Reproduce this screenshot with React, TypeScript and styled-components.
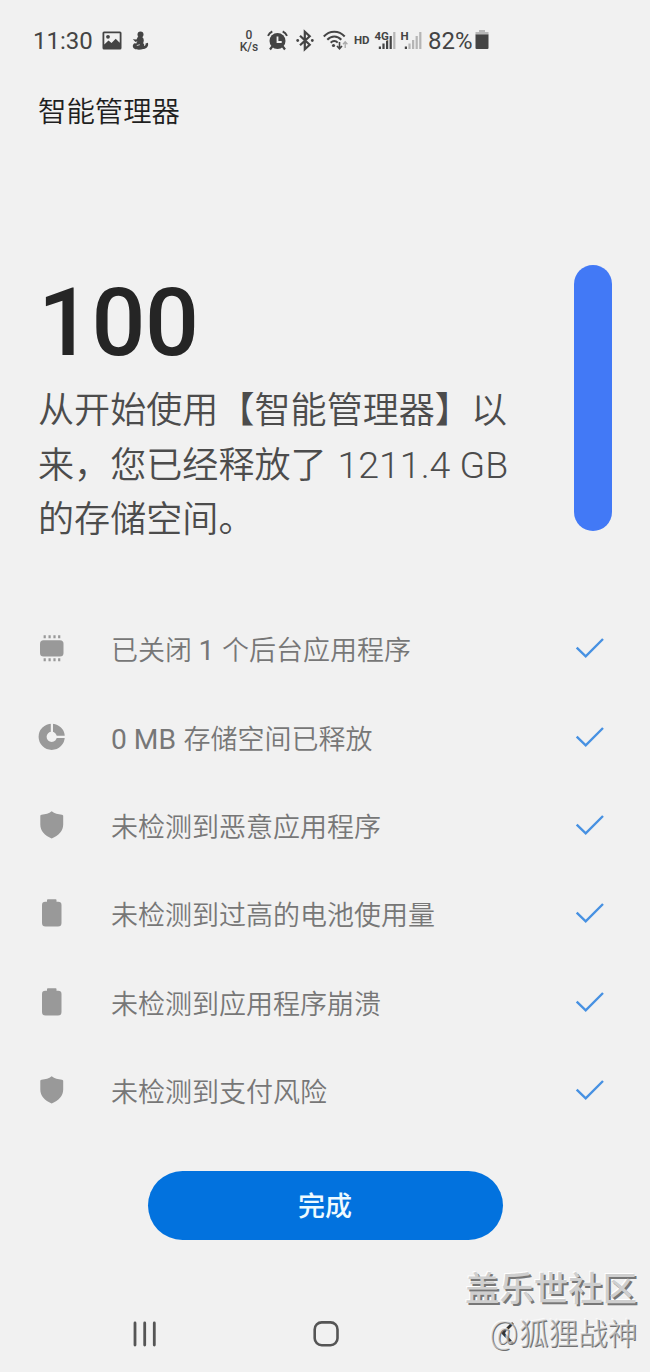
import React from "react";
import styled, { createGlobalStyle } from "styled-components";

const GlobalStyle = createGlobalStyle`
  * { box-sizing: border-box; }
  body {
    margin: 0;
    background: #f1f1f1;
    font-family: Roboto, "Noto Sans CJK SC", sans-serif;
  }
`;

const Screen = styled.div`
  position: relative;
  display: flex;
  flex-direction: column;
  width: 650px;
  height: 1372px;
  background: #f1f1f1;
  overflow: hidden;
`;

const StatusBar = styled.header`
  display: flex;
  align-items: center;
  height: 80px;
  padding-left: 33px;
  color: #444;
`;

const StatusItem = styled.span<{ $w: number; $gap?: number }>`
  flex: none;
  display: flex;
  width: ${(p) => p.$w}px;
  margin-left: ${(p) => p.$gap ?? 0}px;
  white-space: nowrap;

  svg { display: block; overflow: visible; }
`;

const StatusText = styled(StatusItem)`
  font-size: 24px;
  line-height: 28px;
  padding-top: 2px;
`;

const Speed = styled(StatusItem)`
  flex-direction: column;
  align-items: center;
  font-size: 12px;
  font-weight: 500;
  line-height: 12px;
  padding-top: 2px;
`;

const HdLabel = styled(StatusItem)`
  font-size: 11.5px;
  font-weight: 700;
  line-height: 14px;
`;

const Title = styled.h1`
  margin: 0;
  padding: 2px 0 0 38px;
  height: 62px;
  font-size: 28.4px;
  font-weight: 350;
  line-height: 62px;
  color: #1f1f1f;
`;

const Hero = styled.section`
  display: flex;
  justify-content: space-between;
  margin-top: 123px;
  height: 339px;
  padding: 0 38px;
`;

const HeroText = styled.div`
  display: flex;
  flex-direction: column;
`;

const Score = styled.div`
  height: 119px;
  padding-top: 1px;
  font-size: 95px;
  font-weight: 500;
  line-height: 114px;
  letter-spacing: -0.5px;
  color: #252525;
`;

const Summary = styled.p`
  margin: 0;
  font-size: 36.1px;
  font-weight: 350;
  line-height: 54.6px;
  color: #4c4c4c;
  white-space: nowrap;
`;

const Amount = styled.span`
  margin-left: 2px;
  font-size: 37.5px;
  font-weight: 300;
  line-height: 1;
`;

const ScoreBar = styled.div`
  width: 38px;
  height: 266px;
  border-radius: 19px;
  background: #4279f6;
`;

const Results = styled.ul`
  list-style: none;
  margin: 0;
  padding: 0 38px;
`;

const ResultRow = styled.li`
  display: flex;
  align-items: center;
  height: 88.4px;

  svg { display: block; flex: none; }
`;

const ResultText = styled.span`
  flex: 1;
  margin-left: 45px;
  padding-top: 6px;
  font-size: 27px;
  font-weight: 350;
  line-height: 40px;
  color: #777;
`;

const Latin = styled.span`
  margin-right: 1px;
  font-size: 28.2px;
  font-weight: 400;
  line-height: 1;
`;

const DoneButton = styled.button`
  align-self: center;
  width: 355px;
  height: 69px;
  margin-top: 37px;
  padding: 3px 0 0;
  border: 0;
  border-radius: 35px;
  background: #0272de;
  color: #eefaff;
  font: 500 27px/66px Roboto, "Noto Sans CJK SC", sans-serif;
`;

const NavBar = styled.nav`
  display: flex;
  align-items: center;
  height: 76px;
  margin-top: auto;
  padding-left: 132px;

  svg { display: block; }
  svg + svg { margin-left: 155px; }
  svg + svg + svg { margin-left: 156px; }
`;

const Watermark = styled.div`
  position: absolute;
  right: 13px;
  bottom: 17px;
  display: flex;
  flex-direction: column;
  align-items: flex-end;
  white-space: nowrap;
`;

const Community = styled.span`
  font-size: 34.4px;
  font-weight: 500;
  line-height: 48px;
  color: #cfcfcf;
  text-shadow: 2px 2px 0 #777, -1px -1px 0 #fff;
`;

const Author = styled.span`
  font-size: 29.5px;
  font-weight: 350;
  line-height: 42px;
  color: rgba(215, 215, 215, 0.6);
  text-shadow: 1px 1px 0 #707070, -1px -1px 0 rgba(255, 255, 255, 0.7);
`;

const AtSign = styled.span`
  font-size: 31.5px;
  line-height: 1;
  margin-right: 1px;
`;

const PictureIcon = () => (
  <svg width="20" height="19" viewBox="0 0 20 19">
    <path fillRule="evenodd" fill="#444" d="M2 0.5h16a1.5 1.5 0 0 1 1.5 1.5v15a1.5 1.5 0 0 1-1.5 1.5H2A1.5 1.5 0 0 1 .5 17V2A1.5 1.5 0 0 1 2 .5zM2.3 2.2v11.2l4.2-3.9 3 2.5 4.2-4.3 4 4V2.2z" />
    <circle cx="6" cy="5.8" r="1.9" fill="#444" />
  </svg>
);

const FigureIcon = () => (
  <svg width="17" height="19" viewBox="0 0 17 19">
    <circle cx="8.5" cy="3.5" r="3" fill="#444" />
    <path fill="#444" d="M6 5.500c3-1 6 .5 5.800 4.200l-.6 2.600c1.200.9 1.300 2 .8 2.700 1.400-.1 1.900-1.200 1.500-2.400l2.400-.9c1.200 3.700-1.700 6.300-4.800 6.300-2.600.9-6.500.9-8.600-.2C.2 16.500.3 13.800 2.500 12.300l1.900.2c.1-1 .5-1.600 1.100-2.200L3.500 11 .8 8.300 4.500 8.500z" />
    <path d="M4.800 14.500l3-.8" stroke="#ddd" strokeWidth="0.900" />
  </svg>
);

const AlarmIcon = () => (
  <svg width="21" height="21" viewBox="0 0 21 21">
    <path d="M1 5.800Q2.300 2.700 5.300 1.500M20 5.800Q18.700 2.700 15.700 1.500" fill="none" stroke="#444" strokeWidth="1.900" />
    <path d="M5.200 16.500L3 19.500M15.800 16.500l2.200 3" stroke="#444" strokeWidth="2.200" />
    <circle cx="10.500" cy="11" r="8" fill="#444" />
    <path d="M10.500 6.500V12h4.200" fill="none" stroke="#f1f1f1" strokeWidth="1.800" />
  </svg>
);

const BluetoothIcon = () => (
  <svg width="18" height="21" viewBox="0 0 18 21">
    <path d="M4 5.700l9.700 9.100-4.900 4.400V1.800l4.900 4.400L4 15.300" fill="none" stroke="#444" strokeWidth="2.200" />
    <circle cx="1.700" cy="10.500" r="1.400" fill="#444" />
    <circle cx="16.300" cy="10.500" r="1.400" fill="#444" />
  </svg>
);

const WifiIcon = () => (
  <svg width="25" height="20" viewBox="0 0 25 20">
    <path d="M.8 6.500C6.500.1 16 .1 21.700 6.500M4.300 9.700c4-4.300 10-4.300 14 0M7.700 12.700c2.200-2.200 5-2.200 7 0" fill="none" stroke="#444" strokeWidth="2" />
    <circle cx="10.500" cy="15.500" r="1.600" fill="#444" />
    <path d="M16.500 12v6.500M14 16l2.500 2.700L19 16" fill="none" stroke="#444" strokeWidth="1.600" />
    <path d="M22.200 18v-6M20 14.200l2.200-2.400 2.200 2.400" fill="none" stroke="#aaa" strokeWidth="1.300" />
  </svg>
);

const SignalIcon = ({ label, level }: { label: string; level: number }) => (
  <svg width="23" height="20" viewBox="0 0 23 20">
    {[2.5, 5.5, 9, 13, 17].map((h, i) => (
      <rect key={h} x={3.8 + i * 3.6} y={19 - h} width="2.2" height={h} fill={i < level ? "#444" : "#b5b5b5"} />
    ))}
    <text x="-0.500" y="9.500" fontSize="11.500" fontWeight="700" fill="#444" stroke="#f1f1f1" strokeWidth="1.500" paintOrder="stroke">{label}</text>
  </svg>
);

const StatusBattery = () => (
  <svg width="14" height="20" viewBox="0 0 14 20">
    <path d="M4 0h6v2h3.500v3H.5V2H4z" fill="#b8b8b8" />
    <path d="M.5 4.500h13V18a1 1 0 0 1-1 1h-11a1 1 0 0 1-1-1z" fill="#444" />
  </svg>
);

const MemoryIcon = () => (
  <svg width="28" height="28" viewBox="0 0 28 28">
    <rect x="2" y="6.200" width="23.500" height="16.200" rx="3.500" fill="#999" />
    <path d="M6.700 1.300v3M11.600 1.300v3M16.500 1.300v3M21.200 1.300v3M6.700 24.200v3M11.600 24.200v3M16.500 24.200v3M21.200 24.200v3" stroke="#999" strokeWidth="2.200" />
  </svg>
);

const StorageIcon = () => (
  <svg width="28" height="28" viewBox="0 0 28 28">
    <circle cx="13.700" cy="13.800" r="9.100" fill="none" stroke="#999" strokeWidth="8" />
    <path d="M13.900 0v13.800H28" fill="none" stroke="#f1f1f1" strokeWidth="2.200" />
  </svg>
);

const ShieldIcon = () => (
  <svg width="28" height="28" viewBox="0 0 28 28">
    <path d="M13.700.300C16.500 2.400 20 3.400 24 3.700c.8.100 1.200.5 1.200 1.300v8.500c0 6.500-4.500 11-11.500 14C6.700 24.500 2.300 20 2.300 13.500V5c0-.8.400-1.200 1.200-1.300C7.500 3.400 11 2.400 13.700.300z" fill="#999" />
  </svg>
);

const BatteryIcon = () => (
  <svg width="28" height="28" viewBox="0 0 28 28">
    <path d="M10 .200h7.700q.8 0 .8.800v1.700h1.700q3.300 0 3.300 3.300v18q0 3.500-3.500 3.500H7.500Q4 27.500 4 24V6q0-3.300 3.300-3.300H9V1q0-.8 1-.8z" fill="#999" />
  </svg>
);

const CheckIcon = () => (
  <svg width="38" height="28" viewBox="0 0 38 28">
    <path d="M2.700 13.700l9 8.600L29 5" fill="none" stroke="#4791e2" strokeWidth="2.400" />
  </svg>
);

const results = [
  { Icon: MemoryIcon, text: <>已关闭 <Latin>1</Latin> 个后台应用程序</> },
  { Icon: StorageIcon, text: <><Latin>0 MB</Latin> 存储空间已释放</> },
  { Icon: ShieldIcon, text: "未检测到恶意应用程序" },
  { Icon: BatteryIcon, text: "未检测到过高的电池使用量" },
  { Icon: BatteryIcon, text: "未检测到应用程序崩溃" },
  { Icon: ShieldIcon, text: "未检测到支付风险" },
];

export default function App() {
  return (
    <>
      <GlobalStyle />
      <Screen>
        <StatusBar>
          <StatusText $w={60}>11:30</StatusText>
          <StatusItem $w={20} $gap={9}><PictureIcon /></StatusItem>
          <StatusItem $w={17} $gap={10}><FigureIcon /></StatusItem>
          <Speed $w={20} $gap={90}><span>0</span><span>K/s</span></Speed>
          <StatusItem $w={21} $gap={8}><AlarmIcon /></StatusItem>
          <StatusItem $w={18} $gap={8}><BluetoothIcon /></StatusItem>
          <StatusItem $w={25} $gap={9}><WifiIcon /></StatusItem>
          <HdLabel $w={17} $gap={6}>HD</HdLabel>
          <StatusItem $w={23} $gap={4}><SignalIcon label="4G" level={4} /></StatusItem>
          <StatusItem $w={23} $gap={3}><SignalIcon label="H" level={1} /></StatusItem>
          <StatusText $w={46} $gap={4}>82%</StatusText>
          <StatusItem $w={14} $gap={1}><StatusBattery /></StatusItem>
        </StatusBar>
        <Title>智能管理器</Title>
        <Hero>
          <HeroText>
            <Score>100</Score>
            <Summary>
              从开始使用【智能管理器】以<br />
              来，您已经释放了 <Amount>1211.4 GB</Amount><br />
              的存储空间。
            </Summary>
          </HeroText>
          <ScoreBar />
        </Hero>
        <Results>
          {results.map(({ Icon, text }, i) => (
            <ResultRow key={i}>
              <Icon />
              <ResultText>{text}</ResultText>
              <CheckIcon />
            </ResultRow>
          ))}
        </Results>
        <DoneButton>完成</DoneButton>
        <NavBar>
          <svg width="26" height="28" viewBox="0 0 26 28">
            <path d="M3 3v22M12.700 3v22M22.300 3v22" stroke="#555" strokeWidth="2.800" strokeLinecap="round" />
          </svg>
          <svg width="26" height="28" viewBox="0 0 26 28">
            <rect x="1.700" y="2.400" width="22.800" height="22.800" rx="7" fill="none" stroke="#555" strokeWidth="2.600" />
          </svg>
          <svg width="26" height="28" viewBox="0 0 26 28">
            <path d="M18 3L8 13l10 11" fill="none" stroke="#333" strokeWidth="2.800" />
          </svg>
        </NavBar>
        <Watermark>
          <Community>盖乐世社区</Community>
          <Author><AtSign>@</AtSign>狐狸战神</Author>
        </Watermark>
      </Screen>
    </>
  );
}
